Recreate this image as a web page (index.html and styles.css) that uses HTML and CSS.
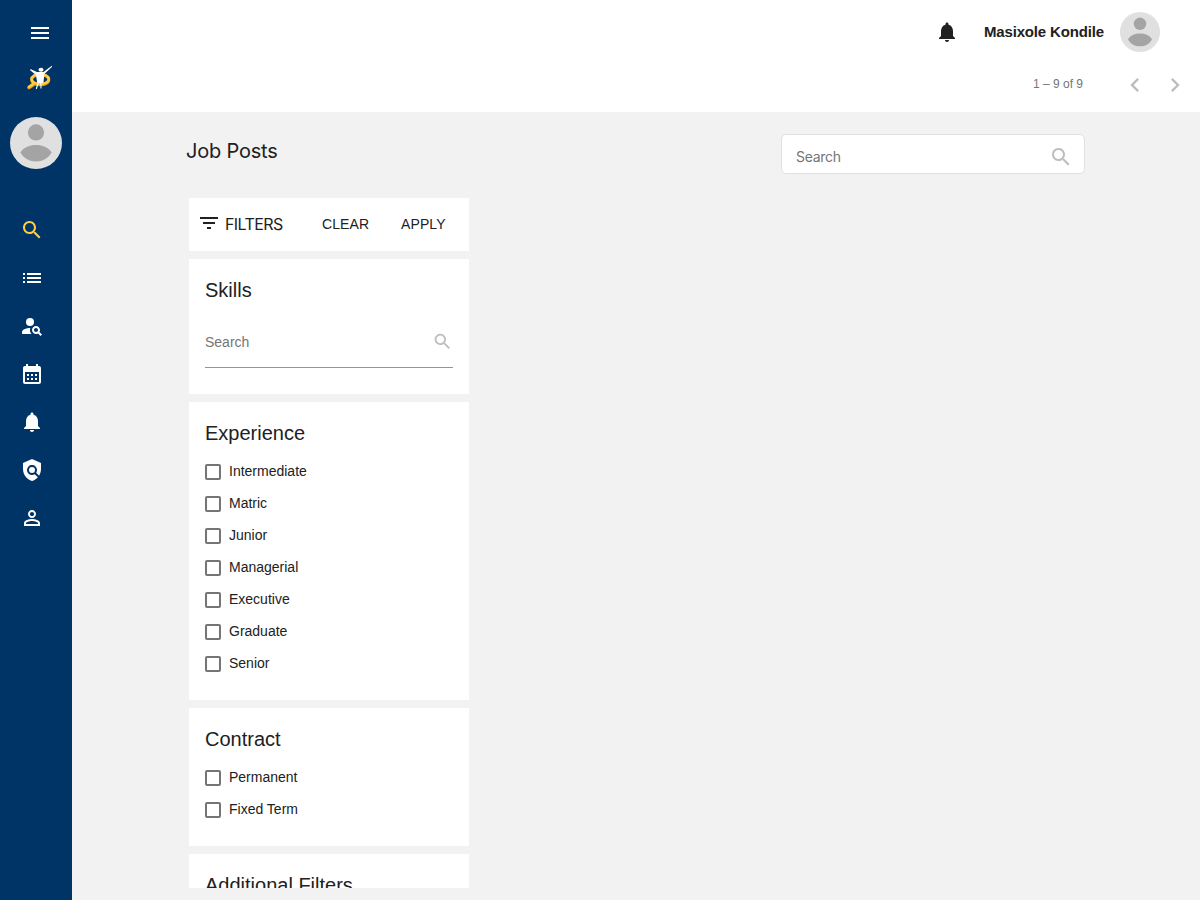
FILE: index.html
```html
<!DOCTYPE html>
<html lang="en">
<head>
<meta charset="utf-8">
<title>Job Posts</title>
<link rel="stylesheet" href="styles.css">
</head>
<body>
<div class="app">
  <nav class="sidebar">
    <svg class="icon menu" viewBox="0 0 24 24"><path d="M3 18h18v-2H3v2zm0-5h18v-2H3v2zm0-7v2h18V6H3z"/></svg>
    <svg class="logo" viewBox="0 0 28 28">
      <path d="M8.5 20.5L4 23.6" stroke="#d99a22" stroke-width="3.6" stroke-linecap="round"/>
      <ellipse cx="15.2" cy="15.7" rx="8.6" ry="5.1" fill="none" stroke="#d99a22" stroke-width="3.1"/>
      <ellipse cx="15.2" cy="15.1" rx="8.6" ry="5" fill="none" stroke="#ffc940" stroke-width="2.5"/>
      <path d="M8.5 19.8L4 22.9" stroke="#ffc940" stroke-width="2.5" stroke-linecap="round"/>
      <path d="M5.4 5L12 8H18.5L26.8 1.8L27.1 2.8L19.4 10L18.4 19H12.3L10.9 11L5.2 6.3Z" fill="#fff"/>
      <path d="M13.3 18L11.3 25M15.8 18L16 24.5" stroke="#fff" stroke-width="1.1"/>
      <ellipse cx="16" cy="5.8" rx="2.5" ry="2" fill="#fff"/>
    </svg>
    <svg class="avatar avatar-large" viewBox="0 0 52 52"><circle cx="26" cy="26" r="26" fill="#e0e0e0"/><circle cx="26" cy="15.4" r="8.1" fill="#a4a4a4"/><path d="M10.4 35.6C16 25.6 36 25.6 41.6 35.6C35 47.6 17 47.6 10.4 35.6Z" fill="#a4a4a4"/></svg>
    <div class="nav-items">
      <svg class="icon active" viewBox="0 0 24 24"><path d="M15.5 14h-.79l-.28-.27C15.41 12.59 16 11.11 16 9.5 16 5.91 13.09 3 9.5 3S3 5.91 3 9.5 5.91 16 9.5 16c1.61 0 3.09-.59 4.23-1.57l.27.28v.79l5 4.99L20.49 19l-4.99-5zm-6 0C7.01 14 5 11.99 5 9.5S7.01 5 9.5 5 14 7.01 14 9.5 11.99 14 9.5 14z"/></svg>
      <svg class="icon" viewBox="0 0 24 24"><path d="M3 13h2v-2H3v2zm0 4h2v-2H3v2zm0-8h2V7H3v2zm4 4h14v-2H7v2zm0 4h14v-2H7v2zM7 7v2h14V7H7z"/></svg>
      <svg class="icon" viewBox="0 0 24 24"><circle cx="10" cy="8" r="4"/><path d="M10.35 14.01C7.62 13.91 2 15.27 2 18v2h9.54c-2.47-2.76-1.23-5.89-1.19-5.99zM19.43 18.02c.36-.59.57-1.28.57-2.02 0-2.21-1.79-4-4-4s-4 1.79-4 4 1.79 4 4 4c.74 0 1.43-.22 2.02-.57L20.59 22 22 20.59l-2.57-2.57zM16 18c-1.1 0-2-.9-2-2s.9-2 2-2 2 .9 2 2-.9 2-2 2z"/></svg>
      <svg class="icon" viewBox="0 0 24 24"><path fill-rule="evenodd" d="M19 4h-1V2h-2v2H8V2H6v2H5c-1.11 0-2 .9-2 2v14a2 2 0 0 0 2 2h14c1.1 0 2-.9 2-2V6c0-1.1-.9-2-2-2zm0 16H5V10h14v10zM7 12h2v2H7zm4 0h2v2h-2zm4 0h2v2h-2zM7 16h2v2H7zm4 0h2v2h-2zm4 0h2v2h-2z"/></svg>
      <svg class="icon" viewBox="0 0 24 24"><path d="M12 22c1.1 0 2-.9 2-2h-4c0 1.1.89 2 2 2zm6-6v-5c0-3.07-1.64-5.64-4.5-6.32V4c0-.83-.67-1.5-1.5-1.5s-1.5.67-1.5 1.5v.68C7.63 5.36 6 7.92 6 11v5l-2 2v1h16v-1l-2-2z"/></svg>
      <svg class="icon" viewBox="0 0 24 24"><path d="M21 5l-9-4-9 4v6c0 5.55 3.84 10.74 9 12 2.3-.56 4.33-1.9 5.88-3.71l-3.12-3.12c-1.94 1.29-4.58 1.07-6.29-.64-1.95-1.95-1.95-5.12 0-7.07 1.95-1.95 5.12-1.95 7.07 0 1.71 1.71 1.92 4.35.64 6.29l2.9 2.9C20.29 15.69 21 13.38 21 11V5z"/><circle cx="12" cy="12" r="3"/></svg>
      <svg class="icon" viewBox="0 0 24 24"><path d="M12 5.9c1.16 0 2.1.94 2.1 2.1s-.94 2.1-2.1 2.1S9.9 9.16 9.9 8s.94-2.1 2.1-2.1m0 9c2.97 0 6.1 1.46 6.1 2.1v1.1H5.9V17c0-.64 3.13-2.1 6.1-2.1M12 4C9.79 4 8 5.79 8 8s1.79 4 4 4 4-1.79 4-4-1.79-4-4-4zm0 9c-2.67 0-8 1.34-8 4v3h16v-3c0-2.66-5.33-4-8-4z"/></svg>
    </div>
  </nav>

  <div class="page">
    <header class="toolbar">
      <svg class="icon bell" viewBox="0 0 24 24"><path d="M12 22c1.1 0 2-.9 2-2h-4c0 1.1.89 2 2 2zm6-6v-5c0-3.07-1.64-5.64-4.5-6.32V4c0-.83-.67-1.5-1.5-1.5s-1.5.67-1.5 1.5v.68C7.63 5.36 6 7.92 6 11v5l-2 2v1h16v-1l-2-2z"/></svg>
      <span class="user-name">Masixole Kondile</span>
      <svg class="avatar" viewBox="0 0 52 52"><circle cx="26" cy="26" r="26" fill="#e0e0e0"/><circle cx="26" cy="15.4" r="8.1" fill="#a4a4a4"/><path d="M10.4 35.6C16 25.6 36 25.6 41.6 35.6C35 47.6 17 47.6 10.4 35.6Z" fill="#a4a4a4"/></svg>
    </header>
    <div class="paginator">
      <span class="range">1 – 9 of 9</span>
      <svg class="arrow" viewBox="0 0 24 24"><path d="M15.41 7.41L14 6l-6 6 6 6 1.41-1.41L10.83 12z"/></svg>
      <svg class="arrow" viewBox="0 0 24 24"><path d="M10 6L8.59 7.41 13.17 12l-4.58 4.59L10 18l6-6z"/></svg>
    </div>

    <main class="content">
      <div class="heading">
        <h1 class="title">Job Posts</h1>
        <div class="search-box">
          <span>Search</span>
          <svg class="icon" viewBox="0 0 24 24"><path d="M15.5 14h-.79l-.28-.27C15.41 12.59 16 11.11 16 9.5 16 5.91 13.09 3 9.5 3S3 5.91 3 9.5 5.91 16 9.5 16c1.61 0 3.09-.59 4.23-1.57l.27.28v.79l5 4.99L20.49 19l-4.99-5zm-6 0C7.01 14 5 11.99 5 9.5S7.01 5 9.5 5 14 7.01 14 9.5 11.99 14 9.5 14z"/></svg>
        </div>
      </div>
      <aside class="filters">
        <div class="card filter-bar">
          <svg class="icon" viewBox="0 0 24 24"><path d="M10 18h4v-2h-4v2zM3 6v2h18V6H3zm3 7h12v-2H6v2z"/></svg>
          <span class="filter-title">FILTERS</span>
          <span class="action clear">CLEAR</span>
          <span class="action">APPLY</span>
        </div>
        <section class="card skills">
          <h2>Skills</h2>
          <div class="field">
            <span>Search</span>
            <svg class="icon" viewBox="0 0 24 24"><path d="M15.5 14h-.79l-.28-.27C15.41 12.59 16 11.11 16 9.5 16 5.91 13.09 3 9.5 3S3 5.91 3 9.5 5.91 16 9.5 16c1.61 0 3.09-.59 4.23-1.57l.27.28v.79l5 4.99L20.49 19l-4.99-5zm-6 0C7.01 14 5 11.99 5 9.5S7.01 5 9.5 5 14 7.01 14 9.5 11.99 14 9.5 14z"/></svg>
          </div>
        </section>
        <section class="card experience">
          <h2>Experience</h2>
          <label class="option"><i class="box"></i><span>Intermediate</span></label>
          <label class="option"><i class="box"></i><span>Matric</span></label>
          <label class="option"><i class="box"></i><span>Junior</span></label>
          <label class="option"><i class="box"></i><span>Managerial</span></label>
          <label class="option"><i class="box"></i><span>Executive</span></label>
          <label class="option"><i class="box"></i><span>Graduate</span></label>
          <label class="option"><i class="box"></i><span>Senior</span></label>
        </section>
        <section class="card contract">
          <h2>Contract</h2>
          <label class="option"><i class="box"></i><span>Permanent</span></label>
          <label class="option"><i class="box"></i><span>Fixed Term</span></label>
        </section>
        <section class="card additional">
          <h2>Additional Filters</h2>
        </section>
      </aside>
    </main>
  </div>
</div>
</body>
</html>
```

FILE: styles.css
```css
* { box-sizing: border-box; }
body {
  margin: 0;
  font-family: "Liberation Sans", Arial, sans-serif;
  color: #212121;
  background: #f2f2f2;
}
svg { display: block; flex: none; }
.app { display: flex; height: 900px; overflow: hidden; }

.sidebar {
  flex: none;
  width: 72px;
  background: #003366;
  display: flex;
  flex-direction: column;
}
.icon { width: 24px; height: 24px; fill: currentColor; }
.sidebar .icon { color: #fff; }
.sidebar .active { color: #ffcf40; }
.menu { margin: 21px 0 0 28px; }
.logo { width: 28px; height: 28px; margin: 19px 0 0 25px; }
.avatar { width: 40px; height: 40px; }
.avatar-large { width: 52px; height: 52px; margin: 25px 0 0 10px; }
.nav-items {
  display: flex;
  flex-direction: column;
  gap: 24px;
  margin: 49px 0 0 20px;
}

.page { flex: 1; display: flex; flex-direction: column; min-width: 0; }
.toolbar {
  flex: none;
  height: 64px;
  display: flex;
  align-items: center;
  justify-content: flex-end;
  padding-right: 40px;
  background: #fff;
}
.bell { margin-right: 25px; }
.user-name {
  width: 120px;
  margin: 0 16px 2px 0;
  font-size: 15px;
  font-weight: 700;
  letter-spacing: -0.17px;
  white-space: nowrap;
}
.paginator {
  flex: none;
  height: 48px;
  display: flex;
  align-items: center;
  justify-content: flex-end;
  padding: 0 11px 6px 0;
  background: #fff;
}
.range {
  margin: 0 38px 3px 0;
  font-size: 12px;
  line-height: 16px;
  color: #757575;
}
.arrow { width: 28px; height: 28px; fill: #bdbdbd; }
.arrow + .arrow { margin-left: 12px; }

.content {
  flex: 1;
  min-height: 0;
  padding: 22px 115px 12px 117px;
  display: flex;
  flex-direction: column;
}
.heading {
  flex: none;
  height: 64px;
  display: flex;
  justify-content: space-between;
  align-items: flex-start;
}
.title {
  margin: 3px 0 0 -3px;
  font: 400 20px/28px Inter, sans-serif;
  letter-spacing: -0.2px;
}
.search-box {
  width: 304px;
  height: 40px;
  padding: 5px 11px 0 14px;
  display: flex;
  align-items: center;
  justify-content: space-between;
  border: 1px solid #e0e0e0;
  border-radius: 5px;
  background: #fff;
  font: 14px/20px Inter, sans-serif;
  letter-spacing: -0.3px;
  color: #757575;
}
.search-box .icon, .field .icon { color: #bdbdbd; }

.filters {
  width: 280px;
  flex: 1;
  min-height: 0;
  overflow: hidden;
  display: flex;
  flex-direction: column;
  gap: 8px;
}
.card { flex: none; padding: 0 16px; background: #fff; }
.filter-bar {
  height: 53px;
  padding: 0 8px 2px;
  display: flex;
  align-items: center;
}
.filter-bar .icon { margin-bottom: 1px; }
.filter-title {
  width: 97px;
  margin-left: 4px;
  font: 16px/24px Inter, sans-serif;
  letter-spacing: -0.6px;
}
.action { font-size: 14px; letter-spacing: 0.1px; }
.clear { width: 79px; }
.card h2 {
  margin: 0;
  padding-top: 17px;
  font-size: 20px;
  line-height: 28px;
  font-weight: 400;
}
.skills { height: 134.5px; }
.field {
  height: 51px;
  margin-top: 13px;
  display: flex;
  align-items: center;
  justify-content: space-between;
  border-bottom: 1px solid #949494;
  font-size: 14px;
  color: #757575;
}
.field .icon { width: 21px; height: 21px; margin-bottom: 2px; }
.experience { height: 298px; }
.contract { height: 138px; }
.additional { height: 138px; }
.card h2 + .option { margin-top: 9px; }
.option {
  height: 32px;
  display: flex;
  align-items: center;
  gap: 8px;
  font-size: 14px;
}
.option span { margin-bottom: 2px; }
.box {
  width: 16px;
  height: 16px;
  border: 2px solid #757575;
  border-radius: 2px;
}
```
